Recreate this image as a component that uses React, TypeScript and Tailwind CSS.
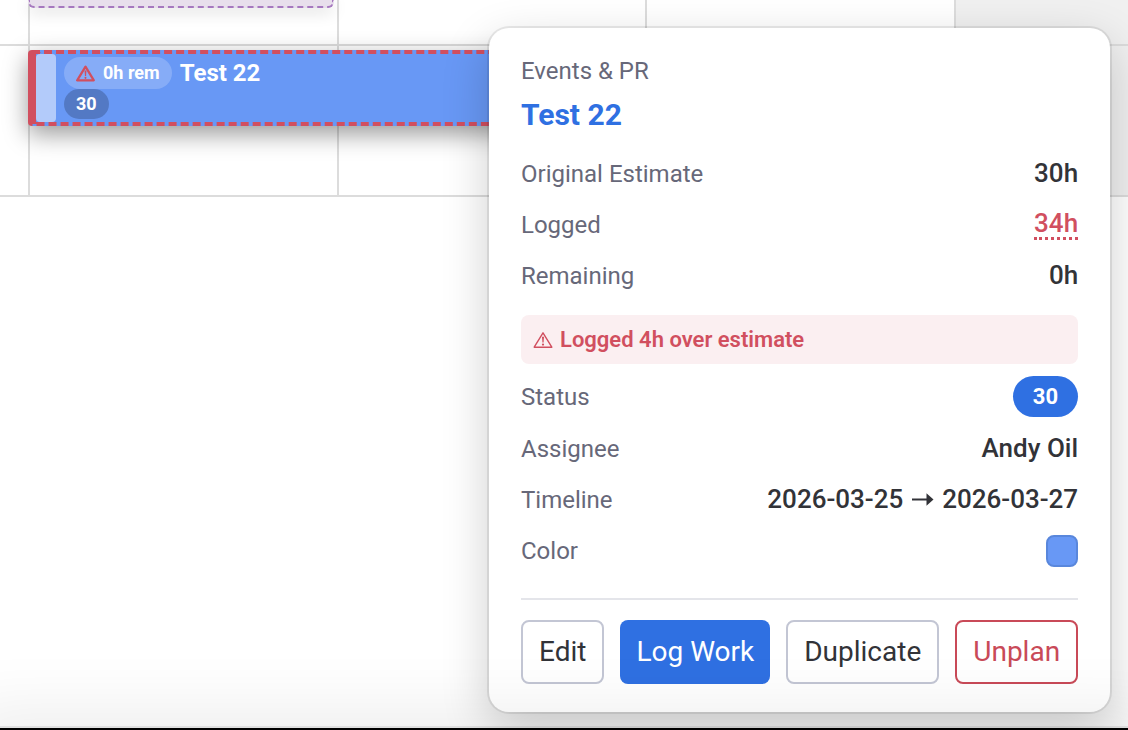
import React from "react";

const WarningIcon: React.FC<{ className?: string; strokeWidth: number }> = ({
  className,
  strokeWidth,
}) => (
  <svg
    viewBox="0 0 20 18"
    className={className}
    fill="none"
    stroke="currentColor"
    strokeWidth={strokeWidth}
    strokeLinejoin="round"
    aria-hidden="true"
  >
    <path d="M10 1.8 1.2 16.2h17.6z" />
    <path d="M9 5.8h2l-.4 5.8h-1.2z" fill="currentColor" stroke="none" />
    <circle cx="10" cy="13.6" r="1.1" fill="currentColor" stroke="none" />
  </svg>
);

const Row: React.FC<{ label: string; children: React.ReactNode }> = ({
  label,
  children,
}) => (
  <div className="flex min-h-[39px] items-center justify-between">
    <dt className="text-2xl leading-9 text-[#676879]">{label}</dt>
    <dd className="text-[26px] leading-[39px] font-medium text-[#323338]">
      {children}
    </dd>
  </div>
);

const cell = "border-r-2 border-[#dcdcdc]";

const GridRow: React.FC<{ className: string }> = ({ className }) => (
  <div
    className={`grid grid-cols-[30px_309px_308px_309px_1fr] border-b-2 border-[#dcdcdc] ${className}`}
  >
    <div className={cell} />
    <div className={cell} />
    <div className={cell} />
    <div className={cell} />
    <div className="bg-[#f0f0f0]" />
  </div>
);

const TaskBar: React.FC = () => (
  <div className="absolute top-[50px] left-7 flex h-[76px] w-[618px] items-stretch rounded border-y-4 border-l-8 border-dashed border-[#d14f5f] bg-[#6898f5] shadow-[0_8px_24px_rgba(0,0,0,0.4)] [border-left-style:solid]">
    <div className="w-5 rounded bg-[#b3cbfa]" />
    <div className="ml-2 flex flex-col items-start pt-[3px] font-bold text-white">
      <div className="flex items-center gap-2">
        <span className="flex h-8 items-center gap-2 rounded-full bg-white/20 px-3 text-lg">
          <WarningIcon
            className="h-[17px] w-[19px] text-[#d14f5f]"
            strokeWidth={2.4}
          />
          0h rem
        </span>
        <span className="text-2xl leading-8">Test 22</span>
      </div>
      <span className="flex h-[30px] items-center rounded-full bg-black/20 px-3 text-lg">
        30
      </span>
    </div>
  </div>
);

const TaskPopover: React.FC = () => (
  <section
    aria-label="Test 22"
    className="absolute top-7 left-[489px] rounded-[20px] bg-white px-8 py-7 shadow-[0_0_0_2px_rgba(0,0,0,0.08),0_16px_48px_rgba(0,0,0,0.2)]"
  >
    <p className="text-2xl leading-[30px] text-[#676879]">Events &amp; PR</p>
    <h2 className="mt-2 mb-[18px] text-[30px] leading-[42px] font-bold text-[#2f70e2]">
      Test 22
    </h2>
    <dl className="flex flex-col gap-3">
      <Row label="Original Estimate">30h</Row>
      <Row label="Logged">
        <span className="block border-b-3 border-dotted border-[#d14f5f] leading-7 text-[#d14f5f]">
          34h
        </span>
      </Row>
      <Row label="Remaining">0h</Row>
    </dl>
    <p className="mt-5 mb-3 flex items-center gap-[7px] rounded-lg bg-[#fbeff1] px-3 py-2 text-[22px] leading-[33px] font-semibold text-[#d14f5f]">
      <WarningIcon className="h-[18px] w-5" strokeWidth={1.4} />
      Logged 4h over estimate
    </p>
    <dl className="flex flex-col gap-3">
      <Row label="Status">
        <span className="block rounded-full bg-[#2f70e2] px-5 py-1 text-[22px] leading-[33px] font-bold text-white">
          30
        </span>
      </Row>
      <Row label="Assignee">Andy Oil</Row>
      <Row label="Timeline">
        <span className="flex items-center gap-2">
          2026-03-25
          <svg viewBox="0 0 23 14" className="h-3.5 w-[23px]" aria-label="to">
            <path d="M1 6.5h16" stroke="currentColor" strokeWidth="2" />
            <path d="M15.5.3l7 6.2-7 6.2z" fill="currentColor" />
          </svg>
          2026-03-27
        </span>
      </Row>
      <Row label="Color">
        <span className="flex h-10 items-center">
          <button
            aria-label="Change color"
            className="size-8 rounded-lg border-2 border-[#5987dc] bg-[#6898f5]"
          />
        </span>
      </Row>
    </dl>
    <div className="mt-[27px] flex gap-4 border-t-2 border-[#e4e5ea] pt-5 text-[28px] leading-[60px]">
      <button className="rounded-lg border-2 border-[#c3c6d4] px-4 text-[#323338]">
        Edit
      </button>
      <button className="rounded-lg bg-[#2f70e2] px-4 text-white">
        Log Work
      </button>
      <button className="rounded-lg border-2 border-[#c3c6d4] px-4 text-[#323338]">
        Duplicate
      </button>
      <button className="rounded-lg border-2 border-[#c94a58] px-4 text-[#c94a58]">
        Unplan
      </button>
    </div>
  </section>
);

const App: React.FC = () => {
  return (
    <main className="relative flex h-screen flex-col overflow-hidden bg-white font-[Roboto,sans-serif]">
      <GridRow className="h-[46px]" />
      <GridRow className="h-[151px]" />
      <div className="absolute top-0 left-7 h-2 w-[306px] rounded-b-md border-2 border-t-0 border-dashed border-[#a678bf] bg-[#e8dfec] shadow-[0_4px_16px_rgba(0,0,0,0.15)]" />
      <TaskBar />
      <TaskPopover />
      <div className="absolute inset-x-0 bottom-0 h-0.5 bg-black shadow-[0_0_0_2px_rgba(0,0,0,0.08),0_16px_64px_36px_rgba(0,0,0,0.07)]" />
    </main>
  );
};

export default App;
